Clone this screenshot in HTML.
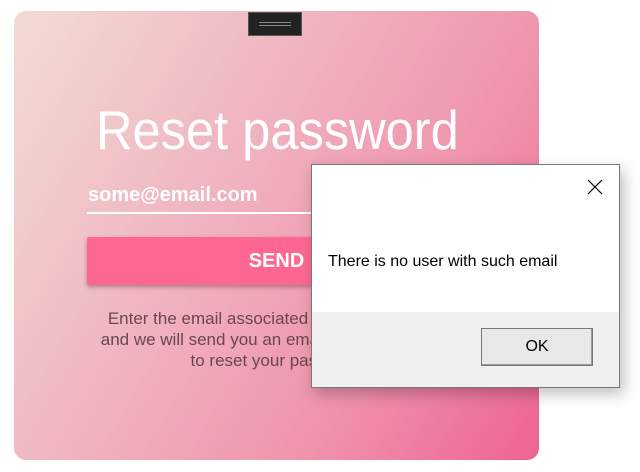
<!DOCTYPE html>
<html><head><style>
body{margin:0;width:640px;height:472px;background:#fff;position:relative;overflow:hidden;font-family:"Liberation Sans",sans-serif}
.card{position:absolute;left:14px;top:11px;width:525px;height:449px;border-radius:12px;background:linear-gradient(120deg,#f2dcd4 0%,#f0b8c2 35%,#ef93ac 70%,#ee6390 100%)}
.handle{position:absolute;left:248px;top:12px;width:52px;height:22px;background:#222;border:1px solid #555}
.handle i{position:absolute;left:10px;right:10px;height:1px;background:#888}
.title{position:absolute;left:96px;top:103px;font-size:55px;line-height:1;color:#fff;white-space:nowrap;transform:scaleX(0.92);transform-origin:left}
.email{position:absolute;left:88px;top:184px;font-size:20px;font-weight:bold;color:#fff}
.line{position:absolute;left:87px;top:212px;width:379px;height:2px;background:#fff}
.btn{position:absolute;left:87px;top:237px;width:379px;height:48px;background:#fe6792;box-shadow:0 2px 4px rgba(0,0,0,.3);border-radius:2px;color:#fff;font-size:20px;line-height:48px;text-align:center;font-weight:bold}
.desc{position:absolute;left:40px;width:473px;top:308px;text-align:center;font-size:17px;line-height:21px;color:#6a4650}
.dlg{position:absolute;left:311px;top:164px;width:307px;height:222px;background:#fff;border:1px solid #777;box-shadow:4px 6px 14px rgba(0,0,0,.25)}
.foot{position:absolute;left:0;right:0;top:147px;bottom:0;background:#f0f0f0}
.msg{position:absolute;left:16px;top:88px;font-size:16px;color:#000}
.ok{position:absolute;left:169px;top:163px;width:110px;height:36px;border:1px solid #777;background:#e8e8e8;box-shadow:inset -1px -1px 0 #999;text-align:center;line-height:36px;font-size:16px}
</style></head><body>
<div class="card"></div>
<div class="handle"><i style="top:9px"></i><i style="top:12px"></i></div>
<div class="title">Reset password</div>
<div class="email">some@email.com</div>
<div class="line"></div>
<div class="btn">SEND</div>
<div class="desc">Enter the email associated with your account<br>and we will send you an email with instructions<br>to reset your password</div>
<div class="dlg">
<svg style="position:absolute;left:275px;top:14px" width="16" height="16"><path d="M1 1L15 15M15 1L1 15" stroke="#000" stroke-width="1.2"/></svg>
<div class="msg">There is no user with such email</div>
<div class="foot"><div class="ok" style="top:16px">OK</div></div>
</div>
</body></html>
